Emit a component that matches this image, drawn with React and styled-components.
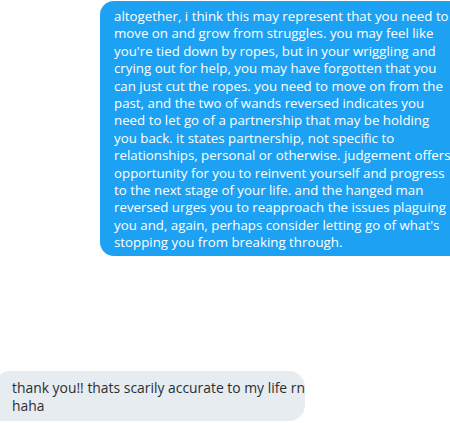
import React from 'react'
import styled, { createGlobalStyle } from 'styled-components'

const GlobalStyle = createGlobalStyle`
  html, body {
    margin: 0;
    padding: 0;
    background: #ffffff;
  }
  body {
    font-family: "Open Sans", "Noto Sans", sans-serif;
  }
`

const Thread = styled.main`
  width: 450px;
  height: 423px;
  overflow: hidden;
  display: flex;
  flex-direction: column;
  justify-content: space-between;
  padding: 1px 0 2px 0;
  box-sizing: border-box;
`

const Bubble = styled.div`
  box-sizing: border-box;
  font-size: ${p => p.size}px;
  line-height: 17.4px;
  white-space: pre;
  ${p => p.mine ? `
    align-self: flex-end;
    width: 356px;
    margin-right: -6px;
    background: #1da1f2;
    color: #ffffff;
    border-radius: 14px 0 0 14px;
    padding: 7px 10px 4px 14px;
  ` : `
    align-self: flex-start;
    width: 311px;
    margin-left: -6px;
    background: #e6ecf0;
    color: #2a2e33;
    border-radius: 16px 16px 16px 0;
    padding: 8px 10px 7px 18px;
  `}
`

const reading = `altogether, i think this may represent that you need to
move on and grow from struggles. you may feel like
you're tied down by ropes, but in your wriggling and
crying out for help, you may have forgotten that you
can just cut the ropes. you need to move on from the
past, and the two of wands reversed indicates you
need to let go of a partnership that may be holding
you back. it states partnership, not specific to
relationships, personal or otherwise. judgement offers
opportunity for you to reinvent yourself and progress
to the next stage of your life. and the hanged man
reversed urges you to reapproach the issues plaguing
you and, again, perhaps consider letting go of what's
stopping you from breaking through.`

const reply = `thank you!! thats scarily accurate to my life rn
haha`

export default function App () {
  return (
    <>
      <GlobalStyle />
      <Thread>
        <Bubble mine size={13.3}>{reading}</Bubble>
        <Bubble size={13.9}>{reply}</Bubble>
      </Thread>
    </>
  )
}
